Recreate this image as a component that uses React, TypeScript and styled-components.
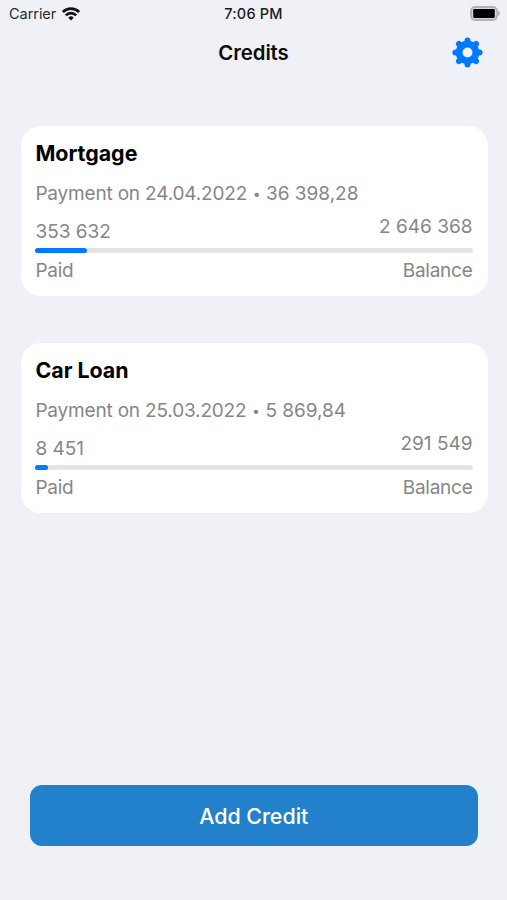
import React from 'react';
import styled, { createGlobalStyle } from 'styled-components';

const Global = createGlobalStyle`
  * { box-sizing: border-box; }
  body { margin: 0; background: #f0f1f6; font-family: Inter, "Liberation Sans", sans-serif; color: #000; }
`;
const Screen = styled.div`
  width: 100%; height: 900px; display: flex; flex-direction: column; background: #f0f1f6; overflow: hidden;
`;
const StatusBar = styled.div`
  height: 27px; padding: 0 6px 0 9px; display: grid; grid-template-columns: 1fr auto 1fr; align-items: center;
`;
const Carrier = styled.div`
  display: flex; align-items: center; gap: 6px; font-size: 14.5px; line-height: 18px; color: #2c2d30; letter-spacing: -0.05px;
`;
const Clock = styled.div`
  font-size: 14.5px; line-height: 18px; font-weight: 550; color: #1c1c1e; letter-spacing: 0.2px; padding-right: 3px;
`;
const BatterySlot = styled.div`display: flex; justify-content: flex-end;`;
const NavBar = styled.header`
  height: 50px; padding: 0 24px; display: grid; grid-template-columns: 1fr auto 1fr; align-items: center;
`;
const Title = styled.h1`
  margin: 0; padding-top: 1px; grid-column: 2; font-size: 20.4px; line-height: 26px; font-weight: 600; letter-spacing: -0.1px; color: #0b0b0c;
`;
const SettingsButton = styled.button`
  border: 0; background: none; padding: 0; justify-self: end; display: flex; color: #007aff;
`;
const List = styled.main`
  flex: 1; padding: 49px 19.5px 0 20.5px; display: flex; flex-direction: column; gap: 47px;
`;
const Card = styled.section`
  height: 170px; padding: 15px 15px 0 14.9px; border-radius: 20px; background: #fff; color: #868686;
`;
const Name = styled.h2`
  margin: 0 0 2px; font-size: 21.4px; line-height: 24px; font-weight: 650; letter-spacing: 0; color: #000;
`;
const PaymentLine = styled.div`
  display: flex; font-size: 19px; line-height: 24px; letter-spacing: -0.18px; padding-top: 15px;
`;
const Bullet = styled.span`width: 19px; text-align: center; font-size: 14px;`;
const Sum = styled.span`letter-spacing: -0.02px;`;
const Amounts = styled.div`
  display: flex; justify-content: space-between; height: 42px; font-size: 19px; line-height: 24px; padding-top: 9px;
`;
const Paid = styled.span`padding-top: 5px;`;
const Track = styled.div`height: 5px; border-radius: 2.5px; background: #e4e4e5;`;
const Fill = styled.div`height: 5px; border-radius: 2.5px; background: #007aff;`;
const Labels = styled.div`
  display: flex; justify-content: space-between; font-size: 19px; line-height: 24px; letter-spacing: -0.25px; margin-top: 6px;
`;
const Footer = styled.footer`padding: 0 29.5px 54px 30px;`;
const AddButton = styled.button`
  display: block; width: 100%; height: 61px; border: 0; border-radius: 12px; padding: 1px 0 0; background: #2381cb; color: #fff;
  font: 500 21.4px Inter, "Liberation Sans", sans-serif; letter-spacing: 0;
`;

const WifiIcon = () => (
  <svg width="18" height="14" viewBox="0 0 18 14" fill="none" stroke="#101012" strokeWidth="2.7">
    <path d="M0.9 5.1A11.4 11.4 0 0 1 17.1 5.1" />
    <path d="M3.8 8.4A7.3 7.3 0 0 1 14.2 8.4" />
    <path d="M6.3 10.7A3.8 3.8 0 0 1 11.7 10.7L9 13.5Z" fill="#101012" stroke="none" />
  </svg>
);

const BatteryIcon = () => (
  <svg width="31" height="15" viewBox="0 0 31 15">
    <rect x="1" y="1" width="26" height="13" rx="4" fill="#d8d8d9" stroke="#b2b2b3" strokeWidth="1.8" />
    <rect x="3.2" y="3" width="21.6" height="9" rx="1.2" fill="#000" />
    <path d="M28 4.8Q32 7.5 28 10.2Z" fill="#b2b2b3" />
  </svg>
);

const teeth = [0, 45, 90, 135, 180, 225, 270, 315];

const GearIcon = () => (
  <svg width="31" height="31" viewBox="-15.5 -15.5 31 31" fill="none" stroke="currentColor">
    <circle r="8.4" strokeWidth="6.8" />
    {teeth.map((angle) => (
      <path key={angle} d="M0 -9V-12.1" strokeWidth="6" strokeLinecap="round" transform={`rotate(${angle})`} />
    ))}
  </svg>
);

const credits = [
  { name: 'Mortgage', due: 'Payment on 24.04.2022', amount: '36 398,28', paid: '353 632', balance: '2 646 368', progress: 11.8 },
  { name: 'Car Loan', due: 'Payment on 25.03.2022', amount: '5 869,84', paid: '8 451', balance: '291 549', progress: 2.8 },
];

export default function App() {
  return (
    <Screen>
      <Global />
      <StatusBar>
        <Carrier>Carrier<WifiIcon /></Carrier>
        <Clock>7:06 PM</Clock>
        <BatterySlot><BatteryIcon /></BatterySlot>
      </StatusBar>
      <NavBar>
        <Title>Credits</Title>
        <SettingsButton aria-label="Settings"><GearIcon /></SettingsButton>
      </NavBar>
      <List>
        {credits.map((c) => (
          <Card key={c.name}>
            <Name>{c.name}</Name>
            <PaymentLine><span>{c.due}</span><Bullet>•</Bullet><Sum>{c.amount}</Sum></PaymentLine>
            <Amounts><Paid>{c.paid}</Paid><span>{c.balance}</span></Amounts>
            <Track><Fill style={{ width: `${c.progress}%` }} /></Track>
            <Labels><span>Paid</span><span>Balance</span></Labels>
          </Card>
        ))}
      </List>
      <Footer><AddButton>Add Credit</AddButton></Footer>
    </Screen>
  );
}
